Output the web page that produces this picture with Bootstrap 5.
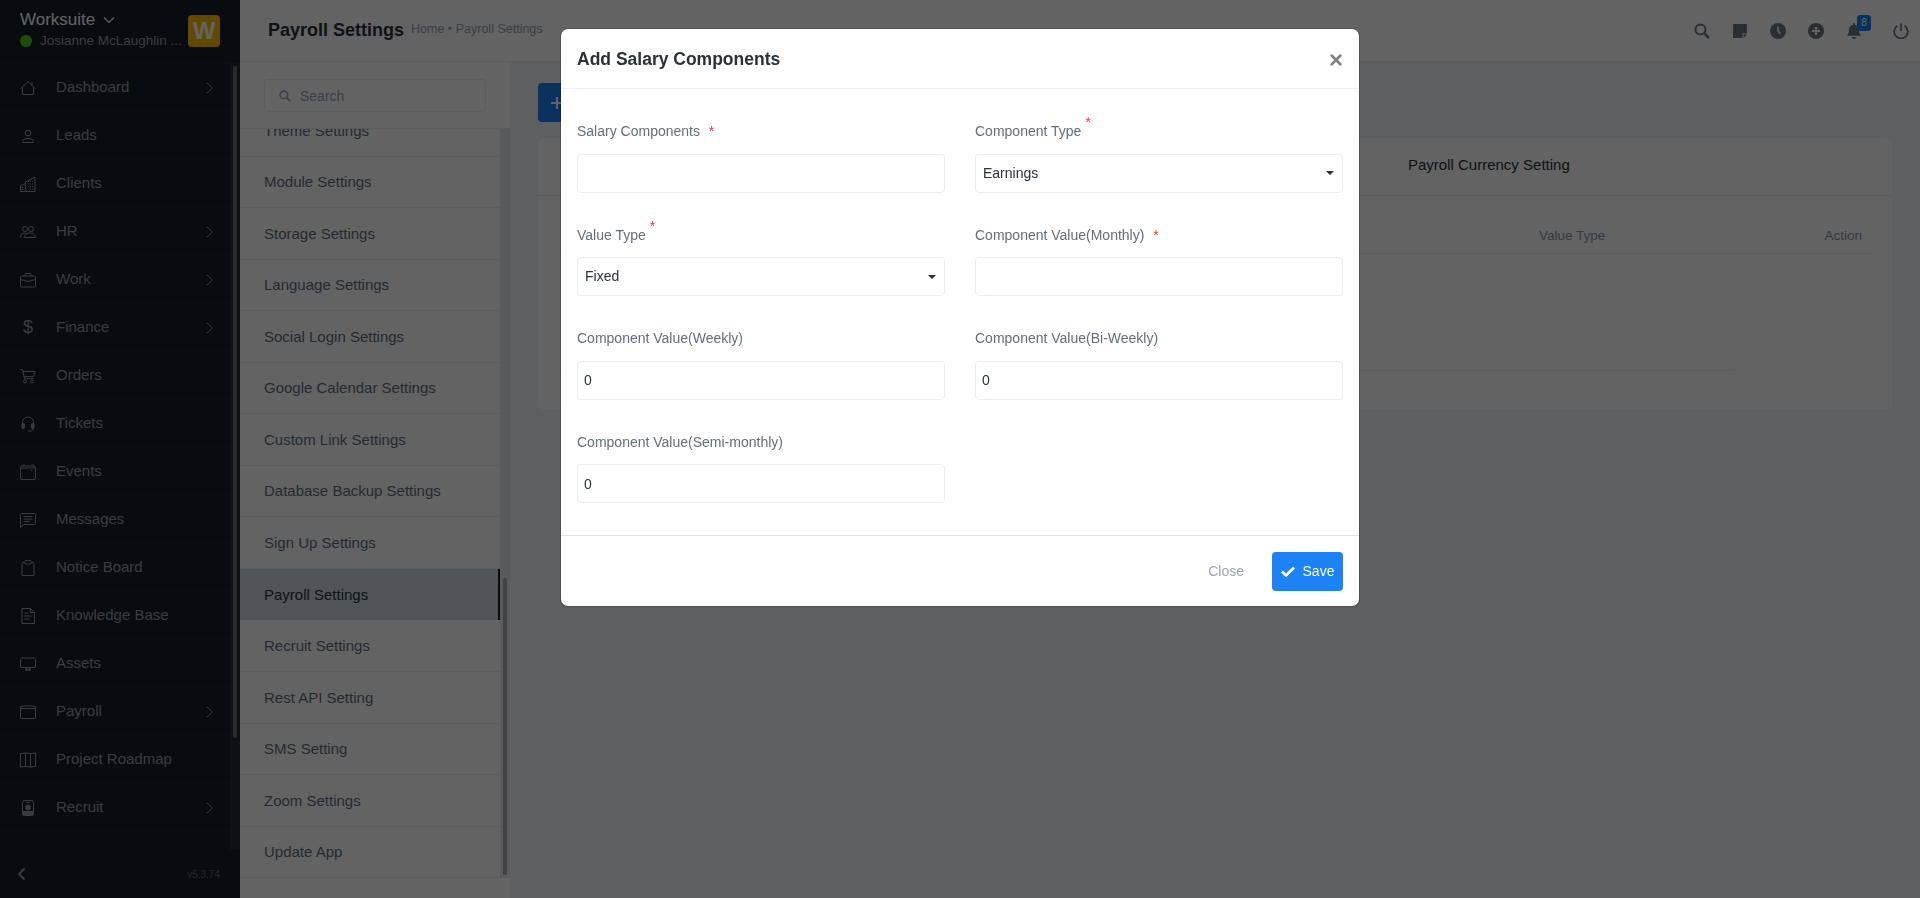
<!DOCTYPE html>
<html lang="en">
<head>
  <meta charset="UTF-8">
  <meta name="viewport" content="width=device-width, initial-scale=1.0">
  <title>Payroll Settings - Worksuite</title>
  <link rel="stylesheet" href="https://cdn.jsdelivr.net/npm/bootstrap@5.3.0/dist/css/bootstrap.min.css">
  <style>
    body { font-family: "Liberation Sans", Arial, sans-serif; font-size: 14px; color: #28313c; height: 898px; overflow: hidden; background: #f2f4f7; }
    .modal-backdrop { --bs-backdrop-opacity: .61; }

    /* left menu */
    .side-menu { width: 240px; height: 898px; background: #171f29; color: #8f9aa9; }
    .side-head { height: 63px; padding: 8px 20px 0; border-bottom: 1px solid #1f2733; }
    .brand-name { color: #fff; font-size: 17px; line-height: 24px; }
    .brand-user { font-size: 13.5px; line-height: 18px; }
    .status-dot { width: 12px; height: 12px; border-radius: 50%; background: #4ecb1c; }
    .brand-logo { width: 32px; height: 32px; border-radius: 4px; background: #fcbd01; color: #fff; font-weight: 700; font-size: 24px; line-height: 32px; text-align: center; margin-top: 7px; }
    .menu-scroll { height: 787px; overflow: hidden; }
    .menu-list { width: 230px; }
    .menu-row { height: 48px; padding: 2px 16px 0 20px; border-bottom: 1px solid #1f2733; font-size: 15px; }
    .menu-row svg.mi { width: 16px; height: 16px; margin-right: 20px; flex: none; }
    .menu-row .dollar { width: 16px; margin-right: 20px; text-align: center; font-size: 18px; }
    .menu-track { width: 10px; background: #242a33; padding: 3px; }
    .menu-thumb { height: 672px; background: #6e6e6e; border-radius: 3px; }
    .side-foot { height: 48px; padding: 0 20px 0 17px; }
    .ver-text { font-size: 10px; color: #56606d; }

    /* top bar */
    .top-strip { height: 62px; background: #fff; padding: 0 11px 0 28px; border-bottom: 1px solid #e8eef3; }
    .page-name { font-size: 18px; font-weight: 700; margin: 0 7px 0 0; }
    .crumb-text { font-size: 12.5px; color: #99a5b5; margin-top: -2px; }
    .top-icon { width: 16px; height: 16px; color: #6f7987; }
    .icon-gap { gap: 22px; }
    .power-icon { margin-left: 9px; }
    .bell-wrap { position: relative; }
    .bell-count { position: absolute; left: 11px; top: -8px; width: 14px; height: 16px; line-height: 16px; font-size: 10px; text-align: center; color: #fff; background: #1d82f5; border-radius: 3px; }

    /* settings list */
    .settings-col { width: 270px; background: #fff; height: 836px; }
    .settings-search { height: 67px; padding: 17px 24px 0; border-bottom: 1px solid #e8eef3; }
    .search-box { height: 33px; width: 222px; border: 1px solid #e8eef3; border-radius: 4px; padding: 1px 0 0 14px; color: #99a5b5; gap: 9px; }
    .settings-scroll { height: 749px; overflow: hidden; }
    .settings-list { width: 260px; margin-top: -24px; }
    .settings-row { height: 51.56px; padding: 1px 0 0 24px; border-bottom: 1px solid #e8eef3; font-size: 15px; color: #616e80; }
    .settings-row.on { background: #d0dae3; color: #28313c; border-right: 2px solid #171f29; border-bottom: 0; }
    .settings-track { width: 10px; background: #e6e8ea; padding: 449px 3px 3px; }
    .settings-thumb { height: 297px; background: #a8a8a8; border-radius: 3px; }

    /* content */
    .page-body { padding: 21px 28px; }
    .add-btn { height: 39px; width: 190px; padding: 0 12px; background: #1d82f5; color: #fff; border-radius: 4px; margin-bottom: 16px; }
    .pay-card { background: #fff; border-radius: 6px; height: 272px; }
    .pay-tabs { height: 58px; padding: 0 0 2px 870px; border-bottom: 1px solid #e8eef3; font-size: 15px; }
    .pay-table { width: 1314px; margin-left: 20px; table-layout: fixed; }
    .pay-table th { height: 57px; padding: 0 10px 6px; vertical-align: bottom; font-weight: 400; font-size: 13.5px; color: #8b97a7; border-bottom: 1px solid #e8eef3; }
    .pay-table td { height: 117px; padding: 0; }
    .pay-table td.lined { border-bottom: 1px solid #e8eef3; }

    /* modal */
    .salary-head { height: 60px; padding: 2px 16px 0; border-bottom: 1px solid #e8eef3; }
    .salary-title { font-size: 17.5px; font-weight: 700; color: #28313c; margin: 0; }
    .x-btn { border: 0; background: none; padding: 0; color: #808080; font-size: 24px; font-weight: 700; line-height: 1; }
    .salary-body { padding: 31px 16px 1px; }
    .salary-body .row { --bs-gutter-x: 30px; }
    .field-wrap { margin-bottom: 31px; }
    .field-label { color: #616e80; line-height: 21.5px; padding-top: 1px; margin-bottom: 11px; display: block; }
    .req-star { color: #f33; line-height: 0; margin-left: 4px; vertical-align: 9px; }
    .req-star.flat { margin-left: 5px; vertical-align: 0; }
    .field-input { height: 39px; border: 1px solid #e8eef3; border-radius: 4px; font-size: 14px; color: #28313c; padding: 6px; }
    .field-select { height: 39px; width: 100%; border: 1px solid #e8eef3; border-radius: 4px; background: #fff; color: #28313c; font-size: 14px; padding: 0 8px 0 7px; }
    .field-select::after { border-top-width: 4px; border-left-width: 4px; border-right-width: 4px; }
    .salary-foot { padding: 16px 16px 15px; border-top: 1px solid #e0e4e8; gap: 28px; }
    .close-link { color: #99a5b5; }
    .save-btn { height: 39px; width: 71px; padding: 0; background: #1d82f5; color: #fff; border: 0; border-radius: 4px; gap: 8px; }
  </style>
</head>
<body>

<div class="d-flex">
  <!-- left menu -->
  <aside class="side-menu d-flex flex-column flex-shrink-0">
    <div class="side-head d-flex justify-content-between">
      <div>
        <div class="brand-name d-flex align-items-center">Worksuite
          <svg class="ms-2" width="12" height="12" viewBox="0 0 12 12" fill="none" stroke="currentColor" stroke-width="1.2"><path d="M1 3.500l5 5 5-5"/></svg>
        </div>
        <div class="d-flex align-items-center">
          <span class="status-dot me-2 flex-shrink-0"></span>
          <span class="brand-user text-nowrap">Josianne McLaughlin ...</span>
        </div>
      </div>
      <div class="brand-logo">W</div>
    </div>

    <div class="menu-scroll d-flex">
      <div class="menu-list">
        <div class="menu-row d-flex align-items-center">
          <svg class="mi" viewBox="0 0 16 16" fill="none" stroke="currentColor"><path d="M2.500 7.500V14.500h11V7.500M1 8.500L8 1.500l7 7M12 2v3.500"/></svg>Dashboard
          <svg class="ms-auto" width="8" height="12" viewBox="0 0 8 12" fill="none" stroke="currentColor"><path d="M1 1l5.500 5L1 11"/></svg>
        </div>
        <div class="menu-row d-flex align-items-center">
          <svg class="mi" viewBox="0 0 16 16" fill="none" stroke="currentColor"><circle cx="8" cy="5" r="2.800"/><path d="M2.500 14.500v-1c0-2 2.500-3 5.500-3s5.500 1 5.500 3v1z"/></svg>Leads
        </div>
        <div class="menu-row d-flex align-items-center">
          <svg class="mi" viewBox="0 0 16 16" fill="none" stroke="currentColor"><path d="M.5 15.500V9.500l5-2M5.500 15.500V6l9.500-5v14.500zM.5 15.500h15"/><path stroke-dasharray="1 1" d="M8 5.500h5M8 8h5M8 10.500h5M8 13h5M2 11.500h2M2 13.500h2"/></svg>Clients
        </div>
        <div class="menu-row d-flex align-items-center">
          <svg class="mi" viewBox="0 0 16 16" fill="none" stroke="currentColor"><circle cx="5" cy="5" r="2.500"/><circle cx="11" cy="5" r="2.500"/><path d="M.5 13.500c0-3 1.500-4.500 4-4.500 1 0 2 .3 2.500 1M4.500 13.500c0-3 2-4.500 4.500-4.500h1.500c2.500 0 5 1.500 5 4.500z"/></svg>HR
          <svg class="ms-auto" width="8" height="12" viewBox="0 0 8 12" fill="none" stroke="currentColor"><path d="M1 1l5.500 5L1 11"/></svg>
        </div>
        <div class="menu-row d-flex align-items-center">
          <svg class="mi" viewBox="0 0 16 16" fill="none" stroke="currentColor"><rect x=".5" y="4" width="15" height="11" rx="1"/><path d="M5 4V2.500c0-.6.400-1 1-1h4c.6 0 1 .4 1 1V4M.5 7.500L8 9.500l7.500-2"/></svg>Work
          <svg class="ms-auto" width="8" height="12" viewBox="0 0 8 12" fill="none" stroke="currentColor"><path d="M1 1l5.500 5L1 11"/></svg>
        </div>
        <div class="menu-row d-flex align-items-center">
          <span class="dollar">$</span>Finance
          <svg class="ms-auto" width="8" height="12" viewBox="0 0 8 12" fill="none" stroke="currentColor"><path d="M1 1l5.500 5L1 11"/></svg>
        </div>
        <div class="menu-row d-flex align-items-center">
          <svg class="mi" viewBox="0 0 16 16" fill="none" stroke="currentColor"><path d="M.5 1.500h2l2 9h9M3 3.500h12l-1.500 5H4.200"/><circle cx="5" cy="13.500" r="1.500"/><circle cx="12" cy="13.500" r="1.500"/></svg>Orders
        </div>
        <div class="menu-row d-flex align-items-center">
          <svg class="mi" viewBox="0 0 16 16" fill="none" stroke="currentColor"><path d="M2.500 9V6.500a5.500 5.500 0 0 1 11 0V9M13 11.500v1.500c0 1-1 2-2 2H8"/><rect x="2" y="7.500" width="2.500" height="5" rx="1" fill="currentColor"/><rect x="11.500" y="7.500" width="2.500" height="5" rx="1" fill="currentColor"/></svg>Tickets
        </div>
        <div class="menu-row d-flex align-items-center">
          <svg class="mi" viewBox="0 0 16 16" fill="none" stroke="currentColor"><rect x=".5" y="2" width="15" height="13.500" rx="1.500"/><path d="M.5 4h15M4 .5V2M12 .5V2M11 6.500h1.500" stroke-width="1.200"/></svg>Events
        </div>
        <div class="menu-row d-flex align-items-center">
          <svg class="mi" viewBox="0 0 16 16" fill="none" stroke="currentColor"><path d="M1.500 1.500h13c.6 0 1 .4 1 1v9c0 .6-.4 1-1 1H4l-3.500 3V2.500c0-.6.400-1 1-1z"/><path d="M3.500 4.500h9M3.500 7h9M3.500 9.500h6"/></svg>Messages
        </div>
        <div class="menu-row d-flex align-items-center">
          <svg class="mi" viewBox="0 0 16 16" fill="none" stroke="currentColor"><path d="M5 2.500H3c-.6 0-1 .4-1 1V15c0 .3.200.5.500.5h11c.3 0 .5-.2.500-.5V3.500c0-.6-.4-1-1-1h-2"/><rect x="5" y=".5" width="6" height="3.500" rx="1"/></svg>Notice Board
        </div>
        <div class="menu-row d-flex align-items-center">
          <svg class="mi" viewBox="0 0 16 16" fill="none" stroke="currentColor"><path d="M2 .5h8.500L14.500 4.500V15.500H2zM10.500.5v4h4M4.500 5h4M4.500 8h7M4.500 11h5"/></svg>Knowledge Base
        </div>
        <div class="menu-row d-flex align-items-center">
          <svg class="mi" viewBox="0 0 16 16" fill="none" stroke="currentColor"><rect x=".5" y="2" width="15" height="9.500" rx="1.500"/><path d="M5 14h6M6.500 12v2M9.500 12v2" stroke-width="1.500"/></svg>Assets
        </div>
        <div class="menu-row d-flex align-items-center">
          <svg class="mi" viewBox="0 0 16 16" fill="none" stroke="currentColor"><rect x=".5" y="2" width="15" height="12.500" rx="1"/><path d="M.5 4.500h15"/></svg>Payroll
          <svg class="ms-auto" width="8" height="12" viewBox="0 0 8 12" fill="none" stroke="currentColor"><path d="M1 1l5.500 5L1 11"/></svg>
        </div>
        <div class="menu-row d-flex align-items-center">
          <svg class="mi" viewBox="0 0 16 16" fill="none" stroke="currentColor"><path d="M.5 1.500L5.500 1l5 .5 5-.5v13.500l-5 .5-5-.5-5 .5zM5.500 1v14M10.500 1.500V15.500"/></svg>Project Roadmap
        </div>
        <div class="menu-row d-flex align-items-center">
          <svg class="mi" viewBox="0 0 16 16" fill="none" stroke="currentColor"><rect x="2.500" y=".5" width="11" height="15" rx="2"/><path d="M6 2.500h4"/><circle cx="8" cy="7.500" r="2.500" fill="currentColor"/><path d="M3 11.500h10v3.500H3z" fill="currentColor"/></svg>Recruit
          <svg class="ms-auto" width="8" height="12" viewBox="0 0 8 12" fill="none" stroke="currentColor"><path d="M1 1l5.500 5L1 11"/></svg>
        </div>
      </div>
      <div class="menu-track"><div class="menu-thumb"></div></div>
    </div>

    <div class="side-foot d-flex align-items-center justify-content-between">
      <svg width="9" height="14" viewBox="0 0 9 14" fill="none" stroke="currentColor" stroke-width="2"><path d="M7.500 1.500L2 7l5.500 5.500"/></svg>
      <span class="ver-text">v5.3.74</span>
    </div>
  </aside>

  <div class="flex-grow-1">
    <!-- top bar -->
    <header class="top-strip d-flex align-items-center justify-content-between">
      <div class="d-flex align-items-center">
        <h1 class="page-name">Payroll Settings</h1>
        <span class="crumb-text">Home &bull; Payroll Settings</span>
      </div>
      <div class="d-flex align-items-center icon-gap">
        <svg class="top-icon" viewBox="0 0 16 16" fill="none" stroke="currentColor" stroke-width="2"><circle cx="6.500" cy="6.500" r="5"/><path d="M10.500 10.500l4.500 4.500" stroke-width="2.500"/></svg>
        <svg class="top-icon" viewBox="0 0 16 16" fill="currentColor"><path d="M1 1h14v9.500H10.500V15H1zM11.500 11.500H15L11.500 15z"/></svg>
        <svg class="top-icon" viewBox="0 0 16 16"><circle cx="8" cy="8" r="8" fill="currentColor"/><path d="M8 3.500V8l2.500 3" fill="none" stroke="#fff" stroke-width="1.600"/></svg>
        <svg class="top-icon" viewBox="0 0 16 16"><circle cx="8" cy="8" r="8" fill="currentColor"/><path d="M8 4v8M4 8h8" fill="none" stroke="#fff" stroke-width="2.200"/></svg>
        <div class="bell-wrap d-flex">
          <svg class="top-icon" viewBox="0 0 16 16" fill="currentColor"><path d="M8 0c.6 0 1 .4 1 1v.7c2.500.5 4 2.500 4 5 0 3 .7 4.500 2 6H1c1.300-1.500 2-3 2-6 0-2.500 1.500-4.500 4-5V1c0-.6.400-1 1-1zM6 14h4c0 1.200-.9 2-2 2s-2-.8-2-2z"/></svg>
          <span class="bell-count">8</span>
        </div>
        <svg class="top-icon power-icon" viewBox="0 0 16 16" fill="none" stroke="currentColor" stroke-width="1.800"><path d="M8 .5V8M4.500 2.800a6.800 6.800 0 1 0 7 0"/></svg>
      </div>
    </header>

    <div class="d-flex">
      <!-- settings list -->
      <div class="settings-col flex-shrink-0">
        <div class="settings-search">
          <div class="search-box d-flex align-items-center">
            <svg width="12" height="12" viewBox="0 0 16 16" fill="none" stroke="currentColor" stroke-width="2.200"><circle cx="6.500" cy="6.500" r="5"/><path d="M10.500 10.500l4.500 4.500"/></svg>Search
          </div>
        </div>
        <div class="settings-scroll d-flex">
          <div class="settings-list">
            <div class="settings-row d-flex align-items-center">Theme Settings</div>
            <div class="settings-row d-flex align-items-center">Module Settings</div>
            <div class="settings-row d-flex align-items-center">Storage Settings</div>
            <div class="settings-row d-flex align-items-center">Language Settings</div>
            <div class="settings-row d-flex align-items-center">Social Login Settings</div>
            <div class="settings-row d-flex align-items-center">Google Calendar Settings</div>
            <div class="settings-row d-flex align-items-center">Custom Link Settings</div>
            <div class="settings-row d-flex align-items-center">Database Backup Settings</div>
            <div class="settings-row d-flex align-items-center">Sign Up Settings</div>
            <div class="settings-row on d-flex align-items-center">Payroll Settings</div>
            <div class="settings-row d-flex align-items-center">Recruit Settings</div>
            <div class="settings-row d-flex align-items-center">Rest API Setting</div>
            <div class="settings-row d-flex align-items-center">SMS Setting</div>
            <div class="settings-row d-flex align-items-center">Zoom Settings</div>
            <div class="settings-row d-flex align-items-center">Update App</div>
          </div>
          <div class="settings-track"><div class="settings-thumb"></div></div>
        </div>
      </div>

      <!-- payroll content -->
      <main class="page-body flex-grow-1">
        <div class="add-btn d-flex align-items-center">
          <svg width="14" height="14" viewBox="0 0 14 14" fill="none" stroke="currentColor" stroke-width="2"><path d="M7 1v12M1 7h12"/></svg>
        </div>
        <div class="pay-card">
          <div class="pay-tabs d-flex align-items-center">Payroll Currency Setting</div>
          <table class="pay-table">
            <colgroup><col style="width:971px"><col style="width:206px"><col></colgroup>
            <thead>
              <tr><th></th><th>Value Type</th><th class="text-end">Action</th></tr>
            </thead>
            <tbody>
              <tr><td class="lined" colspan="2"></td><td></td></tr>
            </tbody>
          </table>
        </div>
      </main>
    </div>
  </div>
</div>

<!-- add salary components dialog, open over the page -->
<div class="modal-backdrop show"></div>
<div class="modal d-block">
  <div class="modal-dialog modal-lg">
    <div class="modal-content">
      <div class="salary-head d-flex align-items-center justify-content-between">
        <h5 class="salary-title">Add Salary Components</h5>
        <button type="button" class="x-btn">&times;</button>
      </div>
      <div class="salary-body">
        <div class="row">
          <div class="col-6 field-wrap">
            <label class="field-label">Salary Components <span class="req-star flat">*</span></label>
            <input type="text" class="form-control field-input">
          </div>
          <div class="col-6 field-wrap">
            <label class="field-label">Component Type<span class="req-star">*</span></label>
            <button type="button" class="field-select dropdown-toggle d-flex align-items-center justify-content-between">Earnings</button>
          </div>
          <div class="col-6 field-wrap">
            <label class="field-label">Value Type<span class="req-star">*</span></label>
            <button type="button" class="field-select dropdown-toggle d-flex align-items-center justify-content-between">Fixed</button>
          </div>
          <div class="col-6 field-wrap">
            <label class="field-label">Component Value(Monthly) <span class="req-star flat">*</span></label>
            <input type="text" class="form-control field-input">
          </div>
          <div class="col-6 field-wrap">
            <label class="field-label">Component Value(Weekly)</label>
            <input type="text" class="form-control field-input" value="0">
          </div>
          <div class="col-6 field-wrap">
            <label class="field-label">Component Value(Bi-Weekly)</label>
            <input type="text" class="form-control field-input" value="0">
          </div>
          <div class="col-6 field-wrap">
            <label class="field-label">Component Value(Semi-monthly)</label>
            <input type="text" class="form-control field-input" value="0">
          </div>
        </div>
      </div>
      <div class="salary-foot d-flex align-items-center justify-content-end">
        <span class="close-link">Close</span>
        <button type="button" class="save-btn d-flex align-items-center justify-content-center">
          <svg width="14" height="11" viewBox="0 0 14 11" fill="none" stroke="currentColor" stroke-width="2.600"><path d="M1 5.500l4 4 8-8"/></svg>Save
        </button>
      </div>
    </div>
  </div>
</div>

<script src="https://cdn.jsdelivr.net/npm/bootstrap@5.3.0/dist/js/bootstrap.bundle.min.js"></script>
</body>
</html>
